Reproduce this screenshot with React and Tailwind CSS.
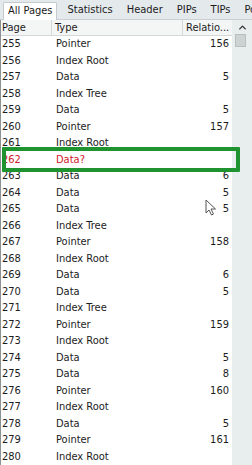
import { ChevronUp } from "lucide-react";

/* Page list rows: [page, type, relation] */
const rows = [
  [255, "Pointer", "156"],
  [256, "Index Root", ""],
  [257, "Data", "5"],
  [258, "Index Tree", ""],
  [259, "Data", "5"],
  [260, "Pointer", "157"],
  [261, "Index Root", ""],
  [262, "Data?", ""],
  [263, "Data", "6"],
  [264, "Data", "5"],
  [265, "Data", "5"],
  [266, "Index Tree", ""],
  [267, "Pointer", "158"],
  [268, "Index Root", ""],
  [269, "Data", "6"],
  [270, "Data", "5"],
  [271, "Index Tree", ""],
  [272, "Pointer", "159"],
  [273, "Index Root", ""],
  [274, "Data", "5"],
  [275, "Data", "8"],
  [276, "Pointer", "160"],
  [277, "Index Root", ""],
  [278, "Data", "5"],
  [279, "Pointer", "161"],
  [280, "Index Root", ""],
];

const tabs = ["All Pages", "Statistics", "Header", "PIPs", "TIPs", "Po"];

export default function App() {
  return (
    <div className="relative h-[465px] w-[252px] overflow-hidden bg-white text-[11px] text-[#1c1c1c] [font-family:'DejaVu_Sans_Condensed','Liberation_Sans',sans-serif]">
      {/* ===== Tab strip ===== */}
      <div className="flex h-[20px] items-end border-b border-[#c9cfd2] bg-[#e4e9ec] pl-[3px] whitespace-nowrap">
        {tabs.map((t, i) =>
          i === 0 ? (
            <div key={t} className="-mb-px mr-[3px] flex h-[18px] items-center rounded-t-[2px] border border-b-0 border-[#c4cacd] bg-white px-[4px]">
              {t}
            </div>
          ) : (
            <div key={t} className="flex h-[18px] items-center px-[7px]">{t}</div>
          )
        )}
      </div>

      <div className="flex border-l border-[#8c9194]">
        {/* ===== Grid ===== */}
        <div className="w-[231px]">
          <div className="flex h-[16px] border-b border-[#d3d8da] bg-[#f4f6f6]">
            <div className="w-[51px] border-r border-[#d3d8da] pl-[1px]">Page</div>
            <div className="w-[131px] border-r border-[#d3d8da] pl-[3px]">Type</div>
            <div className="flex-1 pl-[3px] pr-[2px]">Relatio...</div>
          </div>
          {rows.map(([page, type, rel]) => {
            const hot = page === 262;
            return (
              <div key={page} className={`flex h-[16.5px] items-center ${hot ? "text-[#d0202a]" : ""}`}>
                <div className="w-[51px] pl-[1px]">{page}</div>
                <div className="w-[131px] pl-[4px]">{type}</div>
                <div className="flex-1 pr-[3px] text-right">{rel}</div>
              </div>
            );
          })}
        </div>

        {/* ===== Scrollbar ===== */}
        <div className="flex w-[20px] flex-col bg-[#e8eeed]">
          <div className="flex h-[15px] items-center justify-center pl-[1px]">
            <ChevronUp size={11} strokeWidth={3} className="text-[#333]" />
          </div>
          <div className="ml-[3px] mt-[-1px] h-[13px] w-[11px] border border-[#b8bfbf] bg-[#cdd3d3]" />
        </div>
      </div>

      {/* Green selection highlight */}
      <div className="absolute left-[2px] top-[147px] h-[25px] w-[238px] rounded-[1px] border-[4px] border-[#1f9330]" />

      {/* Mouse cursor */}
      <svg className="absolute left-[205px] top-[199px]" width="13" height="17" viewBox="0 0 13 17">
        <path d="M1 1 L1 14 L4 11 L6.5 16 L8.5 15 L6 10 L10.5 10 Z" fill="#fff" stroke="#555" strokeWidth="1" strokeLinejoin="round" />
      </svg>
    </div>
  );
}
